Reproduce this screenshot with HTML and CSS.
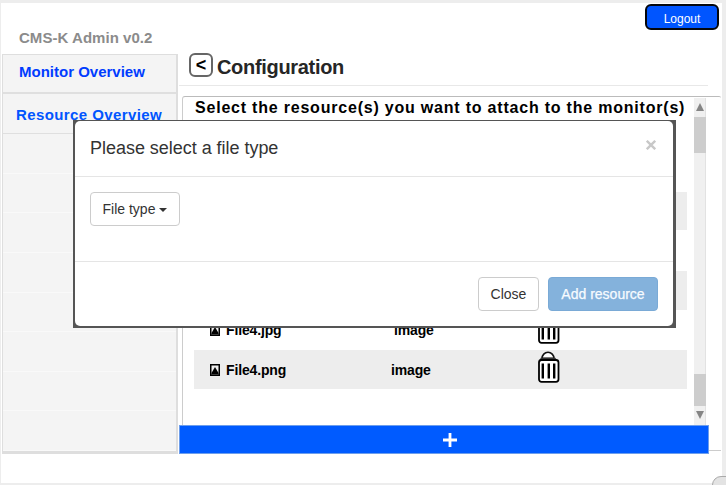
FILE: index.html
```html
<!DOCTYPE html>
<html lang="en">
<head>
<meta charset="utf-8">
<title>CMS-K Admin</title>
<link rel="stylesheet" href="styles.css">
</head>
<body>
<div class="page">
  <header class="header">
    <div class="brand">CMS-K Admin v0.2</div>
    <button class="logout">Logout</button>
  </header>
  <div class="body">
    <nav class="sidebar">
      <a class="item first">Monitor Overview</a>
      <a class="item second">Resource Overview</a>
      <div class="item"></div><div class="item"></div><div class="item"></div><div class="item"></div>
      <div class="item"></div><div class="item"></div><div class="item"></div><div class="item"></div>
    </nav>
    <main class="main">
      <div class="heading"><button class="back">&lt;</button><h1>Configuration</h1></div>
      <section class="panel">
        <div class="list">
          <h2>Select the resource(s) you want to attach to the monitor(s)</h2>
          <div class="rows">
            <div class="row"></div><div class="row"></div><div class="row"></div><div class="row"></div>
            <div class="row">
              <svg class="pic" viewBox="0 0 10 12"><path d="M.75.75h8.5v10.5H.75z" fill="#ededed" stroke="#000" stroke-width="1.5"/><path d="M1.5 10.5V9L5 3l3.5 6v1.5z"/></svg>
              <span class="name jpg">File4.jpg</span><span class="type shifted">image</span>
              <svg class="trash" viewBox="0 0 22 32"><path d="M4 7.5a6 6.2 0 0 1 12 0z" fill="#fff" stroke="#111" stroke-width="1.6"/><path d="M3 6.5h14l3 3.5H1z" fill="#333"/><rect x="1" y="9" width="19.5" height="21.8" rx="2.5" fill="#fff" stroke="#000" stroke-width="1.8"/><path d="M4.8 12.5v15M10.8 12.5v15M16.2 12.5v15" stroke="#000" stroke-width="2.4"/></svg>
            </div>
            <div class="row">
              <svg class="pic" viewBox="0 0 10 12"><path d="M.75.75h8.5v10.5H.75z" fill="#ededed" stroke="#000" stroke-width="1.5"/><path d="M1.5 10.5V9L5 3l3.5 6v1.5z"/></svg>
              <span class="name">File4.png</span><span class="type">image</span>
              <svg class="trash" viewBox="0 0 22 32"><path d="M4 7.5a6 6.2 0 0 1 12 0z" fill="#fff" stroke="#111" stroke-width="1.6"/><path d="M3 6.5h14l3 3.5H1z" fill="#333"/><rect x="1" y="9" width="19.5" height="21.8" rx="2.5" fill="#fff" stroke="#000" stroke-width="1.8"/><path d="M4.8 12.5v15M10.8 12.5v15M16.2 12.5v15" stroke="#000" stroke-width="2.4"/></svg>
            </div>
          </div>
        </div>
        <div class="scroll">
          <svg class="arrow" viewBox="0 0 8 8"><path d="M0 8 4 0l4 8z"/></svg>
          <div class="thumb upper"></div>
          <div class="thumb lower"></div>
          <svg class="arrow" viewBox="0 0 8 8"><path d="M0 0h8L4 8z"/></svg>
        </div>
      </section>
      <button class="add" aria-label="Add"><svg viewBox="0 0 14 14"><path d="M7 0v14M0 7h14" stroke="#fff" stroke-width="2.8"/></svg></button>
    </main>
  </div>
</div>
<div class="corner"></div>
<div class="overlay">
  <div class="dialog">
    <div class="dialog-head"><h3>Please select a file type</h3><svg class="close" viewBox="0 0 10 10"><path d="m.8.8 8.4 8.4M9.2.8.8 9.2" stroke="#c8c8c8" stroke-width="2.4"/></svg></div>
    <div class="dialog-body"><button class="btn select">File type<span class="caret"></span></button></div>
    <div class="dialog-foot"><button class="btn dismiss">Close</button><button class="btn primary">Add resource</button></div>
  </div>
</div>
</body>
</html>
```
FILE: styles.css
```css
* { box-sizing: border-box; }
body { margin: 0; width: 726px; height: 485px; overflow: hidden; background: #ededed; padding: 3px 4px 2px 1px; font-family: "Liberation Sans", Arial, sans-serif; position: relative; }
button { font-family: inherit; padding: 0; margin: 0; }
h1, h2, h3 { margin: 0; white-space: nowrap; }
.page { height: 480px; background: #fff; }
.header { height: 51px; display: flex; justify-content: space-between; padding: 1px 3px 0 18px; }
.brand { font-size: 15px; font-weight: bold; color: #8b8b8b; line-height: 18px; padding-top: 25px; letter-spacing: .04px; white-space: nowrap; }
.logout { width: 74px; height: 26px; border: 2px solid #05070c; border-radius: 6px; background: #0055ff; color: #fff; font-size: 12px; padding: 3px 0 0; }
.body { display: grid; grid-template-columns: 176px 1fr; gap: 1px; padding-left: 1px; height: 400px; }
.sidebar { display: grid; grid-template-rows: 39px 40px repeat(8, 1fr); border: 1px solid #dedede; border-right-width: 2px; border-bottom: 3px solid #dedede; background: #f4f4f4; height: 400px; }
.item { border-bottom: 1px solid #f9f9f9; color: #003cff; font-size: 15px; font-weight: bold; white-space: nowrap; }
.first { border-bottom: 2px solid #dfdfdf; padding: 8px 0 0 16px; line-height: 18px; letter-spacing: 0; }
.second { border-bottom-color: #dfdfdf; color: #0055ff; padding: 12px 0 0 13px; line-height: 18px; letter-spacing: .4px; }
.main { min-width: 0; }
.heading { width: 529px; height: 32px; border-bottom: 1px solid #e8e8e8; padding-left: 10px; display: flex; gap: 4px; align-items: flex-start; }
.back { width: 24px; height: 24px; border: 2px solid #666; border-radius: 6px; background: #fff; color: #000; font-size: 18px; font-weight: bold; line-height: 20px; margin-top: -1px; }
h1 { font-size: 20px; line-height: 24px; color: #262626; padding-top: 1px; letter-spacing: -.32px; }
.panel { display: flex; margin: 10px 0 0 3px; width: 539px; height: 330px; border-top: 1px solid #bbb; border-left: 1px solid #ccc; border-radius: 3px 2px 0 0; }
.list { width: 511px; padding-left: 11px; }
h2 { font-size: 16px; line-height: 20px; height: 55px; padding: 1px 0 0 1px; letter-spacing: .79px; color: #000; }
.rows { width: 493px; }
.row { height: 39.7px; display: flex; align-items: center; padding-left: 16px; border-bottom: 1px solid #fff; font-size: 14px; font-weight: bold; color: #000; letter-spacing: -.15px; }
.row:nth-child(even) { background: #ededed; }
.pic { width: 10px; height: 12px; margin-right: 6px; }
.name { width: 165px; }
.jpg { width: 168px; }
.type { width: 147px; }
.shifted { width: 144px; }
.trash { width: 22px; height: 32px; margin-top: -5px; }
.scroll { width: 12px; height: 328px; margin-top: 1px; background: #f0f0f0; border-right: 1px solid #e2e2e2; display: flex; flex-direction: column; align-items: center; }
.arrow { width: 8px; height: 8px; fill: #858585; flex-shrink: 0; }
.scroll .arrow:first-child { margin: 5px 0 6px; }
.thumb { width: 12px; background: #cdcdcd; }
.upper { height: 36px; }
.lower { height: 32px; margin: 221px 0 5px; }
.add { width: 530px; height: 29px; margin-top: -1px; display: flex; align-items: center; justify-content: center; background: #005bff; border: 1px solid #6d9eec; padding-left: 11px; position: relative; }
.main::after { content: ""; display: block; width: 12px; height: 1px; margin: -4px 0 0 530px; background: #ccc; }
.add svg { width: 14px; height: 14px; }
.corner { position: absolute; left: 712px; top: 476px; width: 28px; height: 20px; border: 1px solid #aaa; border-radius: 9px; background: #e3e3e3; }
.overlay { position: absolute; left: 73px; top: 120px; width: 603px; height: 208px; background: #555; padding: 1px 3px 2px 2px; }
.dialog { width: 598px; height: 205px; background: #fff; border-radius: 5px; display: flex; flex-direction: column; }
.dialog-head { height: 56px; border-bottom: 1px solid #e5e5e5; display: flex; justify-content: space-between; padding: 15px 17px 0 15px; }
h3 { font-size: 18px; font-weight: normal; line-height: 24px; color: #333; letter-spacing: -.03px; }
.close { width: 10px; height: 10px; margin-top: 4px; }
.dialog-body { height: 85px; border-bottom: 1px solid #e5e5e5; padding: 15px; }
.dialog-foot { display: flex; justify-content: flex-end; gap: 9px; padding: 15px 15px 0 0; }
.btn { height: 34px; font-size: 14px; border: 1px solid #ccc; border-radius: 4px; background: #fff; color: #333; white-space: nowrap; }
.select { width: 90px; }
.caret { display: inline-block; border: 4px solid transparent; border-top-color: #333; border-bottom: 0; margin-left: 4px; vertical-align: middle; }
.dismiss { width: 61px; }
.primary { width: 110px; background: #84b2dc; border-color: #7aaad6; color: #f7fbff; -webkit-text-stroke: .25px #f7fbff; }
```
